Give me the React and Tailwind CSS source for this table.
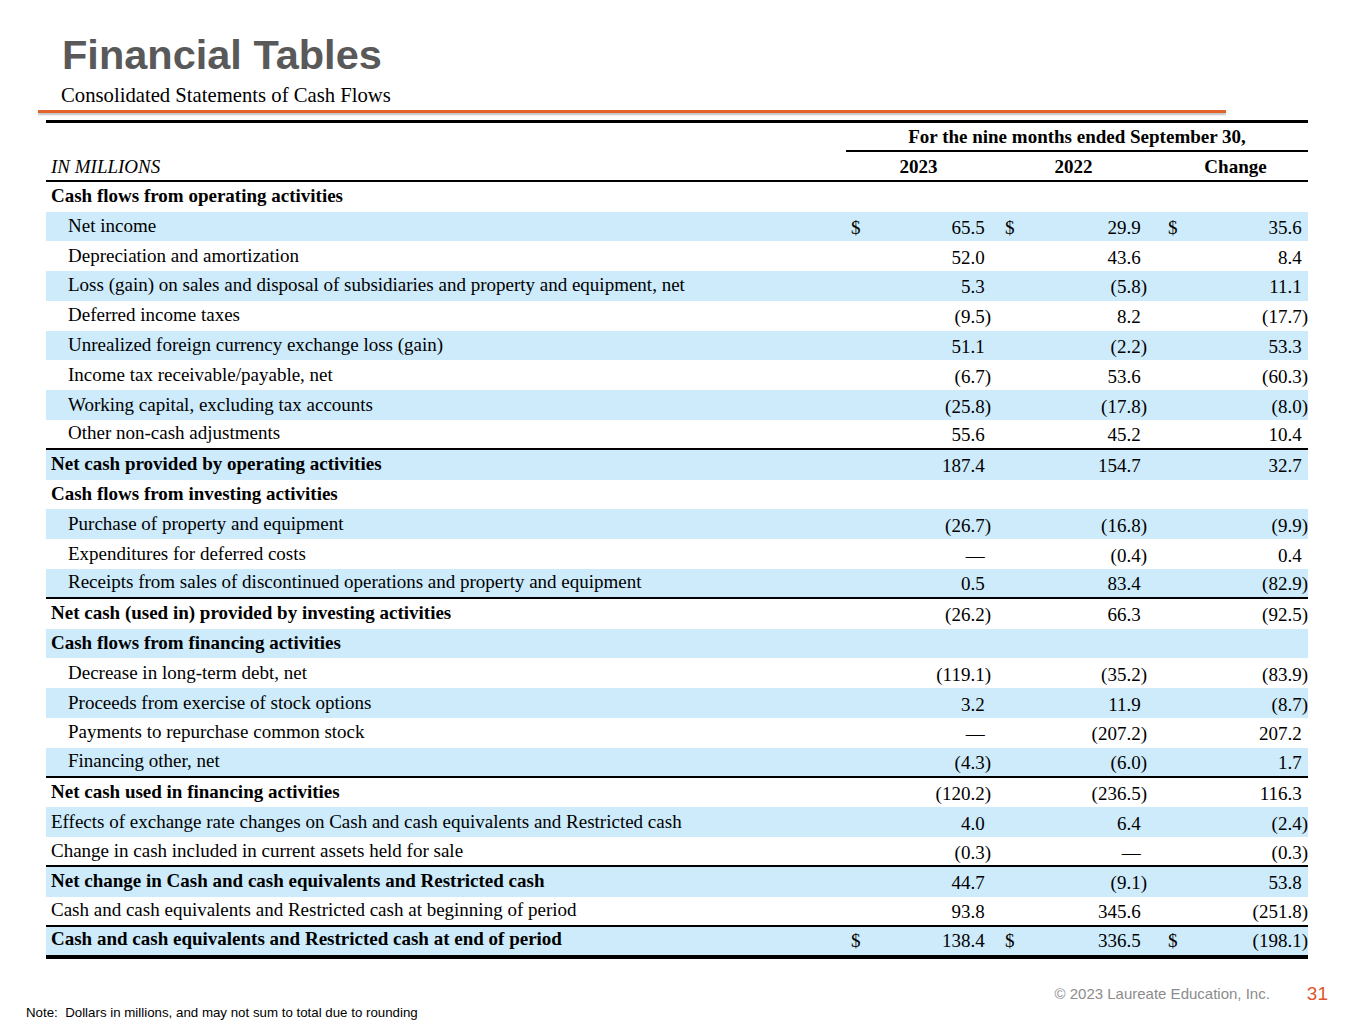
import React from "react";

const serif = { fontFamily: '"Liberation Serif", "Times New Roman", serif' };
const sans = { fontFamily: '"Liberation Sans", Arial, sans-serif' };

// kind: h = section heading, i = indented line item, t = total, p = plain (not indented)
const rows = [
  { label: "Cash flows from operating activities", kind: "h" },
  { label: "Net income", kind: "i", v: ["65.5", "29.9", "35.6"], dollar: true },
  { label: "Depreciation and amortization", kind: "i", v: ["52.0", "43.6", "8.4"] },
  { label: "Loss (gain) on sales and disposal of subsidiaries and property and equipment, net", kind: "i", v: ["5.3", "(5.8)", "11.1"] },
  { label: "Deferred income taxes", kind: "i", v: ["(9.5)", "8.2", "(17.7)"] },
  { label: "Unrealized foreign currency exchange loss (gain)", kind: "i", v: ["51.1", "(2.2)", "53.3"] },
  { label: "Income tax receivable/payable, net", kind: "i", v: ["(6.7)", "53.6", "(60.3)"] },
  { label: "Working capital, excluding tax accounts", kind: "i", v: ["(25.8)", "(17.8)", "(8.0)"] },
  { label: "Other non-cash adjustments", kind: "i", v: ["55.6", "45.2", "10.4"], line: true },
  { label: "Net cash provided by operating activities", kind: "t", v: ["187.4", "154.7", "32.7"] },
  { label: "Cash flows from investing activities", kind: "h" },
  { label: "Purchase of property and equipment", kind: "i", v: ["(26.7)", "(16.8)", "(9.9)"] },
  { label: "Expenditures for deferred costs", kind: "i", v: ["—", "(0.4)", "0.4"] },
  { label: "Receipts from sales of discontinued operations and property and equipment", kind: "i", v: ["0.5", "83.4", "(82.9)"], line: true },
  { label: "Net cash (used in) provided by investing activities", kind: "t", v: ["(26.2)", "66.3", "(92.5)"] },
  { label: "Cash flows from financing activities", kind: "h" },
  { label: "Decrease in long-term debt, net", kind: "i", v: ["(119.1)", "(35.2)", "(83.9)"] },
  { label: "Proceeds from exercise of stock options", kind: "i", v: ["3.2", "11.9", "(8.7)"] },
  { label: "Payments to repurchase common stock", kind: "i", v: ["—", "(207.2)", "207.2"] },
  { label: "Financing other, net", kind: "i", v: ["(4.3)", "(6.0)", "1.7"], line: true },
  { label: "Net cash used in financing activities", kind: "t", v: ["(120.2)", "(236.5)", "116.3"] },
  { label: "Effects of exchange rate changes on Cash and cash equivalents and Restricted cash", kind: "p", v: ["4.0", "6.4", "(2.4)"] },
  { label: "Change in cash included in current assets held for sale", kind: "p", v: ["(0.3)", "—", "(0.3)"], line: true },
  { label: "Net change in Cash and cash equivalents and Restricted cash", kind: "t", v: ["44.7", "(9.1)", "53.8"] },
  { label: "Cash and cash equivalents and Restricted cash at beginning of period", kind: "p", v: ["93.8", "345.6", "(251.8)"], line: true },
  { label: "Cash and cash equivalents and Restricted cash at end of period", kind: "t", v: ["138.4", "336.5", "(198.1)"], dollar: true, last: true },
];

const Amount = ({ value, dollar, width }) => {
  const neg = value.endsWith(")");
  return (
    <div className={`${width} flex justify-between pl-[5px] pt-[2px] font-normal`}>
      <span>{dollar ? "$" : ""}</span>
      <span>
        {value}
        {!neg && <span className="invisible">)</span>}
      </span>
    </div>
  );
};

const Row = ({ row, index }) => {
  const blue = index % 2 === 1;
  const bold = row.kind === "h" || row.kind === "t";
  const indent = row.kind === "i";
  let border = "";
  if (row.line) border = "border-b-2 border-black";
  if (row.last) border = "border-b-[4px] border-black";
  return (
    <div
      className={`flex items-center ${row.last ? "h-[32px] pb-[2px]" : "h-[29.8px]"} ${
        blue ? "bg-[#cdebfb]" : "bg-white"
      } ${border}`}
    >
      <div className={`w-[800px] pb-[2px] ${indent ? "pl-[22px]" : "pl-[5px]"} ${bold ? "font-bold" : ""}`}>
        {row.label}
      </div>
      {row.v && (
        <>
          <Amount value={row.v[0]} dollar={row.dollar} width="w-[145px]" />
          <div className="w-[9px]" />
          <Amount value={row.v[1]} dollar={row.dollar} width="w-[147px]" />
          <div className="w-[16px]" />
          <Amount value={row.v[2]} dollar={row.dollar} width="w-[145px]" />
        </>
      )}
    </div>
  );
};

const App = () => {
  return (
    <div className="w-[1365px] h-[1024px] bg-white text-black overflow-hidden">
      {/* Title */}
      <div className="pl-[62px] pt-[34px]">
        <h1 className="text-[41.5px] leading-none font-bold text-[#595959]" style={sans}>
          Financial Tables
        </h1>
        <p className="mt-[9px] ml-[-1px] text-[20.7px] leading-none" style={serif}>
          Consolidated Statements of Cash Flows
        </p>
      </div>
      <div className="ml-[38px] mt-[5px] w-[1188px] h-[3px] bg-[#e4622c] shadow-[0_2px_2px_rgba(0,0,0,0.25)]" />

      {/* Table */}
      <div className="ml-[46px] mt-[7px] w-[1262px] text-[19px] leading-none" style={serif}>
        <div className="border-t-[3px] border-black" />
        <div className="flex h-[29px] items-center">
          <div className="w-[800px]" />
          <div className="flex-1 h-full flex items-center justify-center font-bold border-b-2 border-black">
            For the nine months ended September 30,
          </div>
        </div>
        <div className="flex h-[29.5px] items-center border-b-2 border-black pt-[2px]">
          <div className="w-[800px] pl-[5px] italic">IN MILLIONS</div>
          <div className="w-[145px] text-center font-bold">2023</div>
          <div className="w-[9px]" />
          <div className="w-[147px] text-center font-bold">2022</div>
          <div className="w-[16px]" />
          <div className="w-[145px] text-center font-bold">Change</div>
        </div>
        {rows.map((row, i) => (
          <Row key={i} row={row} index={i} />
        ))}
      </div>

      {/* Footer */}
      <div className="flex justify-end items-center h-[22px] pr-[37px] mt-[24px] leading-none" style={sans}>
        <span className="text-[15px] text-[#8c8c8c]">© 2023 Laureate Education, Inc.</span>
        <span className="ml-[37px] text-[19px] text-[#e0552b]">31</span>
      </div>
      <div className="pl-[26px] mt-[1px] text-[13.3px] leading-[14px]" style={sans}>
        Note:&nbsp; Dollars in millions, and may not sum to total due to rounding
      </div>
    </div>
  );
};

export default App;
